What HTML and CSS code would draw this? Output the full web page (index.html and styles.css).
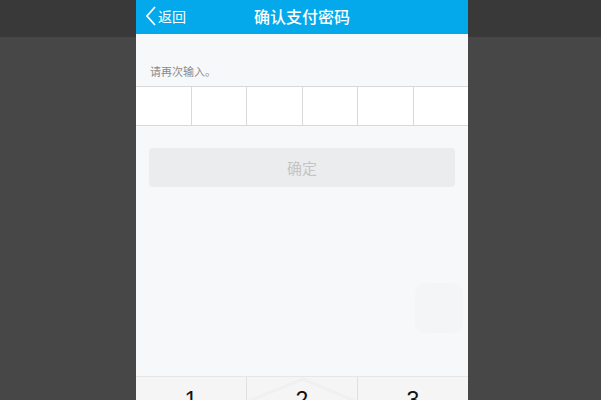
FILE: index.html
```html
<!DOCTYPE html>
<html lang="zh-CN">
<head>
    <meta charset="UTF-8">
    <meta name="viewport" content="width=device-width, initial-scale=1.0">
    <title>确认支付密码</title>
    <link rel="stylesheet" href="styles.css">
</head>
<body>
    <div class="side side-left"><div class="side-band"></div></div>
    <div class="phone">
        <div class="nav-bar">
            <a class="back" href="#">
                <svg class="back-icon" width="12" height="20" viewBox="0 0 12 20">
                    <path d="M10 1 L2 10 L10 19" fill="none" stroke="#fff" stroke-width="1.8"/>
                </svg>
                <span>返回</span>
            </a>
            <div class="nav-title">确认支付密码</div>
        </div>
        <div class="content">
            <div class="hint">请再次输入。</div>
            <div class="pwd-row">
                <div class="pwd-cell"></div>
                <div class="pwd-cell"></div>
                <div class="pwd-cell"></div>
                <div class="pwd-cell"></div>
                <div class="pwd-cell"></div>
                <div class="pwd-cell"></div>
            </div>
            <button class="confirm-btn" disabled>确定</button>
        </div>
        <div class="keypad">
            <div class="key">1</div>
            <div class="key key-mid">
                <svg class="key-hint" width="110" height="24" viewBox="0 0 110 24">
                    <path d="M2 24 L56 2 L108 24" fill="none" stroke="#f0f0f0" stroke-width="3"/>
                </svg>
                <span>2</span>
            </div>
            <div class="key">3</div>
        </div>
        <div class="float-btn"></div>
    </div>
    <div class="side side-right"><div class="side-band"></div></div>
</body>
</html>
```

FILE: styles.css
```css
body {
    margin: 0;
    padding: 0;
    display: flex;
    height: 400px;
    overflow: hidden;
    background: #474747;
    font-family: "Noto Sans CJK SC", "Noto Sans", sans-serif;
}
.side {
    background: #474747;
}
.side-left {
    width: 136px;
}
.side-right {
    flex: 1;
}
.side-band {
    height: 37px;
    background: #393939;
}
.phone {
    width: 332px;
    flex: none;
    display: flex;
    flex-direction: column;
    background: #f7f8fa;
    position: relative;
}
.nav-bar {
    height: 34px;
    background: #03a9eb;
    display: flex;
    align-items: center;
    justify-content: center;
    position: relative;
    color: #fff;
}
.back {
    position: absolute;
    left: 9px;
    top: 0;
    height: 32px;
    display: flex;
    align-items: center;
    gap: 1px;
    color: #fff;
    text-decoration: none;
    font-size: 14px;
}
.nav-title {
    font-size: 16px;
    font-weight: 500;
    margin-top: -2px;
}
.content {
    flex: 1;
}
.hint {
    font-size: 11px;
    color: #8a8a8a;
    padding: 29px 0 0 14px;
    height: 23px;
}
.pwd-row {
    display: flex;
    background: #fff;
    border-top: 1px solid #d9d9d9;
    border-bottom: 1px solid #d9d9d9;
    height: 38px;
}
.pwd-cell {
    flex: 1;
    border-left: 1px solid #d9d9d9;
}
.pwd-cell:first-child {
    border-left: none;
}
.confirm-btn {
    display: block;
    width: 306px;
    height: 39px;
    margin: 22px auto 0;
    border: none;
    border-radius: 4px;
    background: #ebecee;
    color: #c4c4c4;
    font-family: inherit;
    font-size: 15px;
}
.keypad {
    height: 23px;
    display: flex;
    border-top: 1px solid #e6e6e6;
    background: #f5f5f5;
}
.key {
    flex: 1;
    position: relative;
    text-align: center;
    font-family: "Liberation Sans", Arial, sans-serif;
    font-size: 23px;
    line-height: 1;
    padding-top: 12px;
    color: #111;
    overflow: hidden;
}
.key-mid {
    border-left: 1px solid #e0e0e0;
    border-right: 1px solid #e0e0e0;
}
.key-hint {
    position: absolute;
    left: 0;
    top: 0;
}
.key-mid span {
    position: relative;
}
.float-btn {
    position: absolute;
    left: 279px;
    top: 283px;
    width: 48px;
    height: 50px;
    border-radius: 10px;
    background: #f4f5f7;
}
```
